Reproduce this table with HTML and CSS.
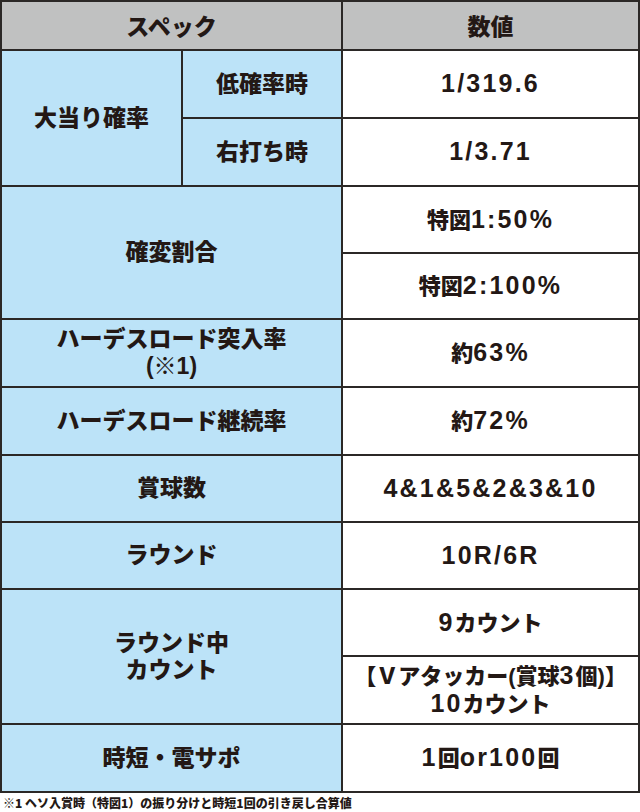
FILE: index.html
```html
<!DOCTYPE html>
<html lang="ja">
<head>
<meta charset="utf-8">
<title>スペック</title>
<link rel="stylesheet" href="styles.css">
</head>
<body>
<table class="spec">
  <colgroup>
    <col class="c1">
    <col class="c2">
    <col class="c3">
  </colgroup>
  <tr class="h-head">
    <th colspan="2">スペック</th>
    <th>数値</th>
  </tr>
  <tr class="h68">
    <td class="lbl" rowspan="2">大当り確率</td>
    <td class="lbl">低確率時</td>
    <td class="val"><span class="num">1/319.6</span></td>
  </tr>
  <tr class="h68">
    <td class="lbl">右打ち時</td>
    <td class="val"><span class="num">1/3.71</span></td>
  </tr>
  <tr class="h67">
    <td class="lbl" colspan="2" rowspan="2">確変割合</td>
    <td class="val">特図<span class="num">1:50%</span></td>
  </tr>
  <tr class="h66">
    <td class="val">特図<span class="num">2:100%</span></td>
  </tr>
  <tr class="h68">
    <td class="lbl two" colspan="2">ハーデスロード突入率<br>(※1)</td>
    <td class="val">約<span class="num">63%</span></td>
  </tr>
  <tr class="h68">
    <td class="lbl" colspan="2">ハーデスロード継続率</td>
    <td class="val">約<span class="num">72%</span></td>
  </tr>
  <tr class="h67">
    <td class="lbl" colspan="2">賞球数</td>
    <td class="val"><span class="num">4&amp;1&amp;5&amp;2&amp;3&amp;10</span></td>
  </tr>
  <tr class="h67">
    <td class="lbl" colspan="2">ラウンド</td>
    <td class="val"><span class="num">10R/6R</span></td>
  </tr>
  <tr class="h67">
    <td class="lbl two" colspan="2" rowspan="2">ラウンド中<br>カウント</td>
    <td class="val"><span class="num">9</span>カウント</td>
  </tr>
  <tr class="h68">
    <td class="val two">【Ｖアタッカー(賞球<span class="num">3</span>個)】<br><span class="num">10</span>カウント</td>
  </tr>
  <tr class="h68">
    <td class="lbl" colspan="2">時短・電サポ</td>
    <td class="val"><span class="num">1</span>回<span class="num">or100</span>回</td>
  </tr>
</table>
<p class="note">※1 ヘソ入賞時（特図1）の振り分けと時短1回の引き戻し合算値</p>
</body>
</html>
```
FILE: styles.css
```css
html, body {
  margin: 0;
  padding: 0;
  background: #ffffff;
}

body {
  width: 640px;
  color: #231815;
  font-family: "Liberation Sans", "Noto Sans CJK JP", sans-serif;
  font-weight: 700;
}

.spec {
  width: 640px;
  table-layout: fixed;
  border-collapse: separate;
  border-spacing: 0;
  border-top: 2px solid #2b2826;
  border-left: 2px solid #2b2826;
}

.c1 { width: 181px; }
.c2 { width: 160px; }
.c3 { width: 297px; }

.spec th,
.spec td {
  padding: 0;
  border-right: 2px solid #2b2826;
  border-bottom: 2px solid #2b2826;
  text-align: center;
  vertical-align: middle;
  font-weight: 900;
  line-height: 27px;
  box-sizing: border-box;
}

.spec th {
  background: #c0c1c1;
  font-size: 23px;
  font-family: "Noto Sans CJK JP", sans-serif;
}

.h-head { height: 49px; }
.h68 { height: 68px; }
.h67 { height: 67px; }
.h66 { height: 66px; }

.lbl {
  background: #bce3f8;
  font-size: 23px;
}

.val {
  background: #ffffff;
  font-size: 22px;
}

.num {
  font-family: "Liberation Sans", sans-serif;
  font-weight: 700;
  font-size: 25px;
  letter-spacing: 2.2px;
}

.note {
  margin: 2px 0 0 3px;
  font-size: 12px;
  line-height: 16px;
  font-family: "Noto Sans CJK JP", sans-serif;
  font-weight: 900;
}
```
